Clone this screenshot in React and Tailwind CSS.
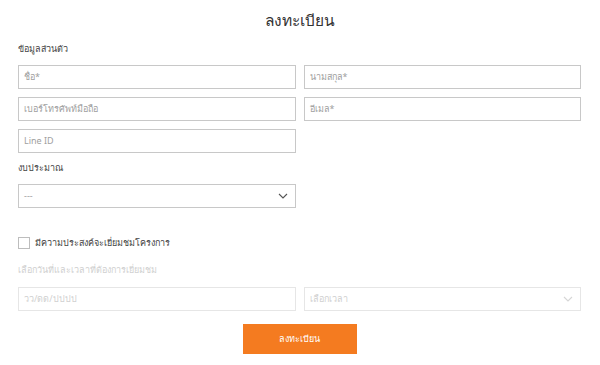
import React from 'react';

const font = { fontFamily: '"Noto Sans", "DejaVu Sans", sans-serif' };

function Field({ placeholder, faded }) {
  return (
    <div
      className={`h-[24px] border px-[5px] flex items-center text-[9px] ${
        faded ? 'border-[#e6e6e6] text-[#d0d0d0]' : 'border-[#c8c8c8] text-[#a0a0a0]'
      }`}
    >
      {placeholder}
    </div>
  );
}

function Chevron({ color }) {
  return (
    <svg width="10" height="6" viewBox="0 0 10 6" fill="none">
      <path d="M1 1l4 4 4-4" stroke={color} strokeWidth="1.1" />
    </svg>
  );
}

function SelectBox({ value, faded }) {
  return (
    <div
      className={`h-[24px] border pl-[5px] pr-[7px] flex items-center justify-between text-[9px] ${
        faded ? 'border-[#e6e6e6] text-[#d0d0d0]' : 'border-[#c8c8c8] text-[#a0a0a0]'
      }`}
    >
      <span>{value}</span>
      <Chevron color={faded ? '#d6d6d6' : '#555'} />
    </div>
  );
}

export default function App() {
  return (
    <div className="w-[600px] h-[365px] bg-white overflow-hidden" style={font}>
      <div className="pl-[18px] pr-[19px] flex flex-col">
        <h1 className="text-center text-[15.5px] leading-[24px] text-[#333] mt-[8px] font-normal">ลงทะเบียน</h1>

        <div className="text-[9px] leading-[14px] text-[#444] mt-[10px]">ข้อมูลส่วนตัว</div>

        <div className="grid grid-cols-2 gap-x-[8px] gap-y-[8px] mt-[9px]">
          <Field placeholder="ชื่อ*" />
          <Field placeholder="นามสกุล*" />
          <Field placeholder="เบอร์โทรศัพท์มือถือ" />
          <Field placeholder="อีเมล*" />
          <Field placeholder="Line ID" />
        </div>

        <div className="text-[9px] leading-[14px] text-[#444] mt-[8px]">งบประมาณ</div>

        <div className="grid grid-cols-2 gap-x-[8px] mt-[9px]">
          <SelectBox value="---" />
        </div>

        <label className="flex items-center gap-[5px] mt-[28px]">
          <span className="w-[12px] h-[12px] border border-[#bdbdbd] bg-white" />
          <span className="text-[9px] leading-[14px] text-[#444]">มีความประสงค์จะเยี่ยมชมโครงการ</span>
        </label>

        <div className="text-[9px] leading-[14px] text-[#d0d0d0] mt-[13px]">เลือกวันที่และเวลาที่ต้องการเยี่ยมชม</div>

        <div className="grid grid-cols-2 gap-x-[8px] mt-[10px]">
          <Field placeholder="วว/ดด/ปปปป" faded />
          <SelectBox value="เลือกเวลา" faded />
        </div>

        <div className="flex justify-center mt-[13px]">
          <button className="w-[114px] h-[30px] bg-[#f47b20] text-white text-[9px]">ลงทะเบียน</button>
        </div>
      </div>
    </div>
  );
}
